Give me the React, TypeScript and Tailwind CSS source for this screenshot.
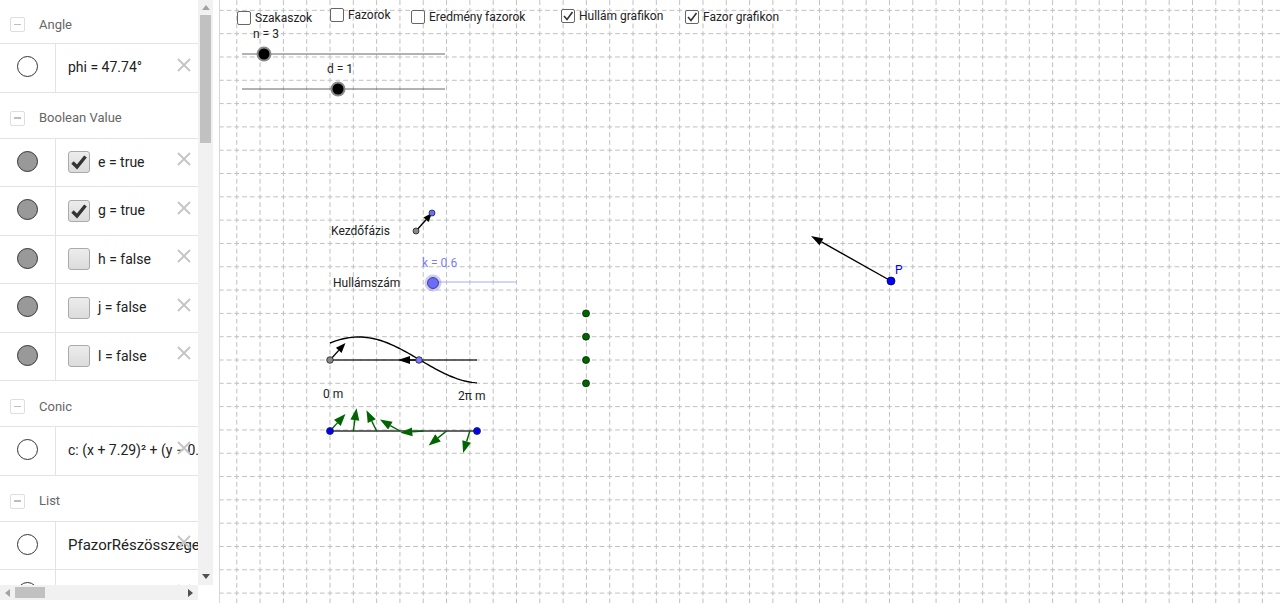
import React from 'react';

const S = 23.31;
const range = (a: number, b: number) => Array.from({ length: b - a + 1 }, (_, i) => a + i);

const headPts = (x1: number, y1: number, x2: number, y2: number, len: number, half: number) => {
  const dx = x2 - x1;
  const dy = y2 - y1;
  const L = Math.hypot(dx, dy);
  const ux = dx / L;
  const uy = dy / L;
  const bx = x2 - ux * len;
  const by = y2 - uy * len;
  return {
    pts: `${x2},${y2} ${bx - uy * half},${by + ux * half} ${bx + uy * half},${by - ux * half}`,
    bx,
    by,
  };
};

const Vector = ({ x1, y1, x2, y2, color = '#000', w = 1.4, len = 10, half = 3.6 }: { x1: number; y1: number; x2: number; y2: number; color?: string; w?: number; len?: number; half?: number }) => {
  const h = headPts(x1, y1, x2, y2, len, half);
  return (
    <g>
      <line x1={x1} y1={y1} x2={h.bx} y2={h.by} stroke={color} strokeWidth={w} />
      <polygon points={h.pts} fill={color} />
    </g>
  );
};

const Dot = ({ x, y, r = 3.5, fill, stroke = '#222' }: { x: number; y: number; r?: number; fill: string; stroke?: string }) => (
  <circle cx={x} cy={y} r={r} fill={fill} stroke={stroke} strokeWidth={0.8} />
);

// sidebar pieces
const Collapse = () => (
  <div className="w-[15px] h-[15px] rounded-[2px] border border-[#dedede] flex items-center justify-center">
    <div className="w-[7px] h-[1.5px] bg-[#bdbdbd]" />
  </div>
);

const Header = ({ label, cls }: { label: string; cls: string }) => (
  <div className={`flex items-center gap-[14px] pl-[10px] pt-[6px] border-b border-[#e3e3e3] ${cls}`}>
    <Collapse />
    <span className="text-[13px] text-[#666]">{label}</span>
  </div>
);

const XIcon = () => (
  <svg width="16" height="16" viewBox="0 0 16 16" className="absolute right-[6px] top-1/2 -translate-y-[11px]">
    <path d="M2 2 L14 14 M14 2 L2 14" stroke="#c4c4c4" strokeWidth="1.8" />
  </svg>
);

const BoolBox = ({ checked }: { checked: boolean }) => (
  <div className="w-[22px] h-[22px] rounded-[3px] border border-[#aaa] bg-gradient-to-b from-[#ececec] to-[#dcdcdc] flex items-center justify-center shrink-0">
    {checked && (
      <svg width="18" height="18" viewBox="0 0 18 18">
        <path d="M2.5 9.5 L7 14 L15.5 3.5" fill="none" stroke="#333" strokeWidth="3.4" strokeLinejoin="miter" />
      </svg>
    )}
  </div>
);

const Row = ({ filled, children }: { filled?: boolean; children: React.ReactNode }) => (
  <div className="relative flex h-[48.5px] border-b border-[#e3e3e3] shrink-0">
    <div className="w-[56px] shrink-0 border-r border-[#e3e3e3] flex items-center justify-center">
      <div className={`w-[21px] h-[21px] rounded-full border border-[#333] -translate-y-[1px] ${filled ? 'bg-[#999]' : 'bg-white'}`} />
    </div>
    <div className="flex-1 flex items-center gap-[8px] pl-[12px] text-[14px] text-[#222] whitespace-nowrap overflow-hidden">
      {children}
    </div>
    <XIcon />
  </div>
);

const CanvasCheck = ({ cls, label, checked }: { cls: string; label: string; checked?: boolean }) => (
  <div className={`absolute flex items-center gap-[4px] ${cls}`}>
    <div className="w-[14px] h-[14px] rounded-[2px] border border-[#666] bg-white flex items-center justify-center">
      {checked && (
        <svg width="12" height="12" viewBox="0 0 12 12">
          <path d="M2 6 L5 9.5 L10.5 2" fill="none" stroke="#333" strokeWidth="1.6" />
        </svg>
      )}
    </div>
    <span className="text-[12px] leading-[14px] text-[#222]">{label}</span>
  </div>
);

const Label = ({ cls, children }: { cls: string; children: React.ReactNode }) => (
  <span className={`absolute text-[12px] leading-[14px] whitespace-nowrap ${cls}`}>{children}</span>
);

export default function App() {
  const xs = range(-5, 41).map((n) => 330 + n * S).filter((x) => x >= 220 && x <= 1280);
  const ys = range(-16, 11).map((n) => 360 + n * S).filter((y) => y >= 0 && y <= 603);
  const p = S / 3;
  const dash = `${p * 0.62} ${p * 0.38}`;
  const hx0 = 330 - p * 0.31 - 16 * p;
  const vy0 = 360 - p * 0.31 - 48 * p;

  const phi = (47.74 * Math.PI) / 180;
  const curve = range(0, 60)
    .map((i) => {
      const t = i / 60;
      const x = 330 + t * 147;
      const y = 360 - 23 * Math.sin(phi + t * 1.2 * Math.PI);
      return `${i === 0 ? 'M' : 'L'}${x.toFixed(2)} ${y.toFixed(2)}`;
    })
    .join(' ');

  const phasors = range(0, 6).map((i) => {
    const bx = 330 + i * S;
    const a = phi + i * ((34.2 * Math.PI) / 180);
    return { bx, tx: bx + 23 * Math.cos(a), ty: 431 - 23 * Math.sin(a) };
  });

  return (
    <div className="w-[1280px] h-[603px] flex bg-white overflow-hidden font-[Roboto,sans-serif]">
      {/* Algebra view */}
      <div className="w-[220px] shrink-0 flex border-r border-[#d6d6d6]">
        <div className="w-[213px] flex flex-col">
          <div className="flex h-[585px]">
            <div className="w-[198px] flex flex-col overflow-hidden">
              <Header label="Angle" cls="h-[44px] shrink-0" />
              <Row>
                <span>phi = 47.74°</span>
              </Row>
              <Header label="Boolean Value" cls="h-[46px] shrink-0" />
              <Row filled>
                <BoolBox checked />
                <span>e = true</span>
              </Row>
              <Row filled>
                <BoolBox checked />
                <span>g = true</span>
              </Row>
              <Row filled>
                <BoolBox checked={false} />
                <span>h = false</span>
              </Row>
              <Row filled>
                <BoolBox checked={false} />
                <span>j = false</span>
              </Row>
              <Row filled>
                <BoolBox checked={false} />
                <span>l = false</span>
              </Row>
              <Header label="Conic" cls="h-[46px] shrink-0" />
              <Row>
                <span>c: (x + 7.29)² + (y − 0.96)² = 4</span>
              </Row>
              <Header label="List" cls="h-[46px] shrink-0" />
              <Row>
                <span className="text-[15px]">PfazorRészösszegek = {'{'}(−7.29, 0.96){'}'}</span>
              </Row>
              <Row>
                <span>u = {'{'}{'}'}</span>
              </Row>
            </div>
            {/* vertical scrollbar */}
            <div className="w-[15px] bg-[#f1f1f1] flex flex-col items-center">
              <div className="h-[15px] flex items-center justify-center">
                <div className="w-0 h-0 border-l-[4px] border-r-[4px] border-b-[5px] border-l-transparent border-r-transparent border-b-[#a3a3a3]" />
              </div>
              <div className="w-[11px] h-[128px] bg-[#c1c1c1]" />
              <div className="flex-1" />
              <div className="h-[17px] flex items-center justify-center">
                <div className="w-0 h-0 border-l-[4px] border-r-[4px] border-t-[5px] border-l-transparent border-r-transparent border-t-[#505050]" />
              </div>
            </div>
          </div>
          {/* horizontal scrollbar */}
          <div className="flex h-[15px]">
            <div className="w-[198px] bg-[#f1f1f1] flex items-center">
              <div className="w-[15px] flex justify-center">
                <div className="w-0 h-0 border-t-[4px] border-b-[4px] border-r-[5px] border-t-transparent border-b-transparent border-r-[#a3a3a3]" />
              </div>
              <div className="w-[30px] h-[11px] bg-[#c1c1c1]" />
              <div className="flex-1" />
              <div className="w-[15px] flex justify-center">
                <div className="w-0 h-0 border-t-[4px] border-b-[4px] border-l-[5px] border-t-transparent border-b-transparent border-l-[#505050]" />
              </div>
            </div>
            <div className="w-[15px] bg-white" />
          </div>
        </div>
      </div>

      {/* Graphics view */}
      <div className="relative flex-1 h-[603px] overflow-hidden">
        <svg width="1060" height="603" className="absolute inset-0">
          <g transform="translate(-220 0)">
            {xs.map((x) => (
              <line key={`v${x}`} x1={x} y1={vy0} x2={x} y2={610} stroke="#c0c0c0" strokeWidth={1} strokeDasharray={dash} />
            ))}
            {ys.map((y) => (
              <line key={`h${y}`} x1={hx0} y1={y} x2={1290} y2={y} stroke="#c0c0c0" strokeWidth={1} strokeDasharray={dash} />
            ))}

            {/* sliders n and d */}
            <line x1={242} y1={54} x2={445} y2={54} stroke="#666" strokeWidth={1} />
            <circle cx={264} cy={54} r={7.5} fill="#8a8a8a" />
            <circle cx={264} cy={54} r={5.5} fill="#000" />
            <line x1={242} y1={89} x2={445} y2={89} stroke="#666" strokeWidth={1} />
            <circle cx={338} cy={89} r={7.5} fill="#8a8a8a" />
            <circle cx={338} cy={89} r={5.5} fill="#000" />

            {/* Kezdőfázis vector */}
            <Vector x1={416} y1={231} x2={432} y2={213} len={9} half={3.5} />
            <Dot x={416} y={231} r={3} fill="#888" />
            <Dot x={432} y={213} r={3} fill="#6b6bff" />

            {/* k slider */}
            <line x1={433} y1={282} x2={516} y2={282} stroke="#a8a8ff" strokeWidth={1} />
            <circle cx={433} cy={283} r={8.5} fill="#6b6bff" opacity={0.35} />
            <circle cx={433} cy={283} r={5.5} fill="#6b6bff" stroke="#333" strokeWidth={0.8} />

            {/* wave graph */}
            <line x1={330} y1={360} x2={477} y2={360} stroke="#333" strokeWidth={1.4} />
            <Vector x1={419} y1={360} x2={398} y2={360} len={12} half={4} />
            <path d={curve} fill="none" stroke="#000" strokeWidth={1.4} />
            <Vector x1={330} y1={360} x2={330 + 23 * Math.cos(phi)} y2={360 - 23 * Math.sin(phi)} len={10} half={3.8} />
            <Dot x={330} y={360} r={3.3} fill="#888" />
            <Dot x={419} y={360} r={3.3} fill="#7a7aff" />

            {/* green dots */}
            {[-2, -1, 0, 1].map((n) => (
              <Dot key={n} x={586} y={360 + n * S} r={3.5} fill="#006400" stroke="#002800" />
            ))}

            {/* phasor row */}
            <line x1={330} y1={431} x2={477} y2={431} stroke="#333" strokeWidth={1.4} />
            {phasors.map((v, i) => (
              <Vector key={i} x1={v.bx} y1={431} x2={v.tx} y2={v.ty} color="#006400" w={1.4} len={12} half={4.5} />
            ))}
            <Dot x={330} y={431} r={3.5} fill="#0000ff" />
            <Dot x={477} y={431} r={3.5} fill="#0000ff" />

            {/* P arrow */}
            <Vector x1={891} y1={281} x2={811} y2={236} len={12} half={4} />
            <Dot x={891} y={281} r={4} fill="#0000ff" stroke="#000060" />
          </g>
        </svg>

        <CanvasCheck cls="left-[17px] top-[11px]" label="Szakaszok" />
        <CanvasCheck cls="left-[110px] top-[8px]" label="Fazorok" />
        <CanvasCheck cls="left-[191px] top-[10px]" label="Eredmény fazorok" />
        <CanvasCheck cls="left-[341px] top-[9px]" label="Hullám grafikon" checked />
        <CanvasCheck cls="left-[465px] top-[10px]" label="Fazor grafikon" checked />

        <Label cls="left-[33px] top-[27px] text-[#222]">n = 3</Label>
        <Label cls="left-[107px] top-[62px] text-[#222]">d = 1</Label>
        <Label cls="left-[111px] top-[224px] text-[#222]">Kezdőfázis</Label>
        <Label cls="left-[113px] top-[276px] text-[#222]">Hullámszám</Label>
        <Label cls="left-[202px] top-[256px] text-[#7b7bff]">k = 0.6</Label>
        <Label cls="left-[103px] top-[387px] text-[#222]">0 m</Label>
        <Label cls="left-[238px] top-[389px] text-[#222]">2π m</Label>
        <Label cls="left-[675px] top-[263px] text-[#0000ff]">P</Label>
      </div>
    </div>
  );
}
